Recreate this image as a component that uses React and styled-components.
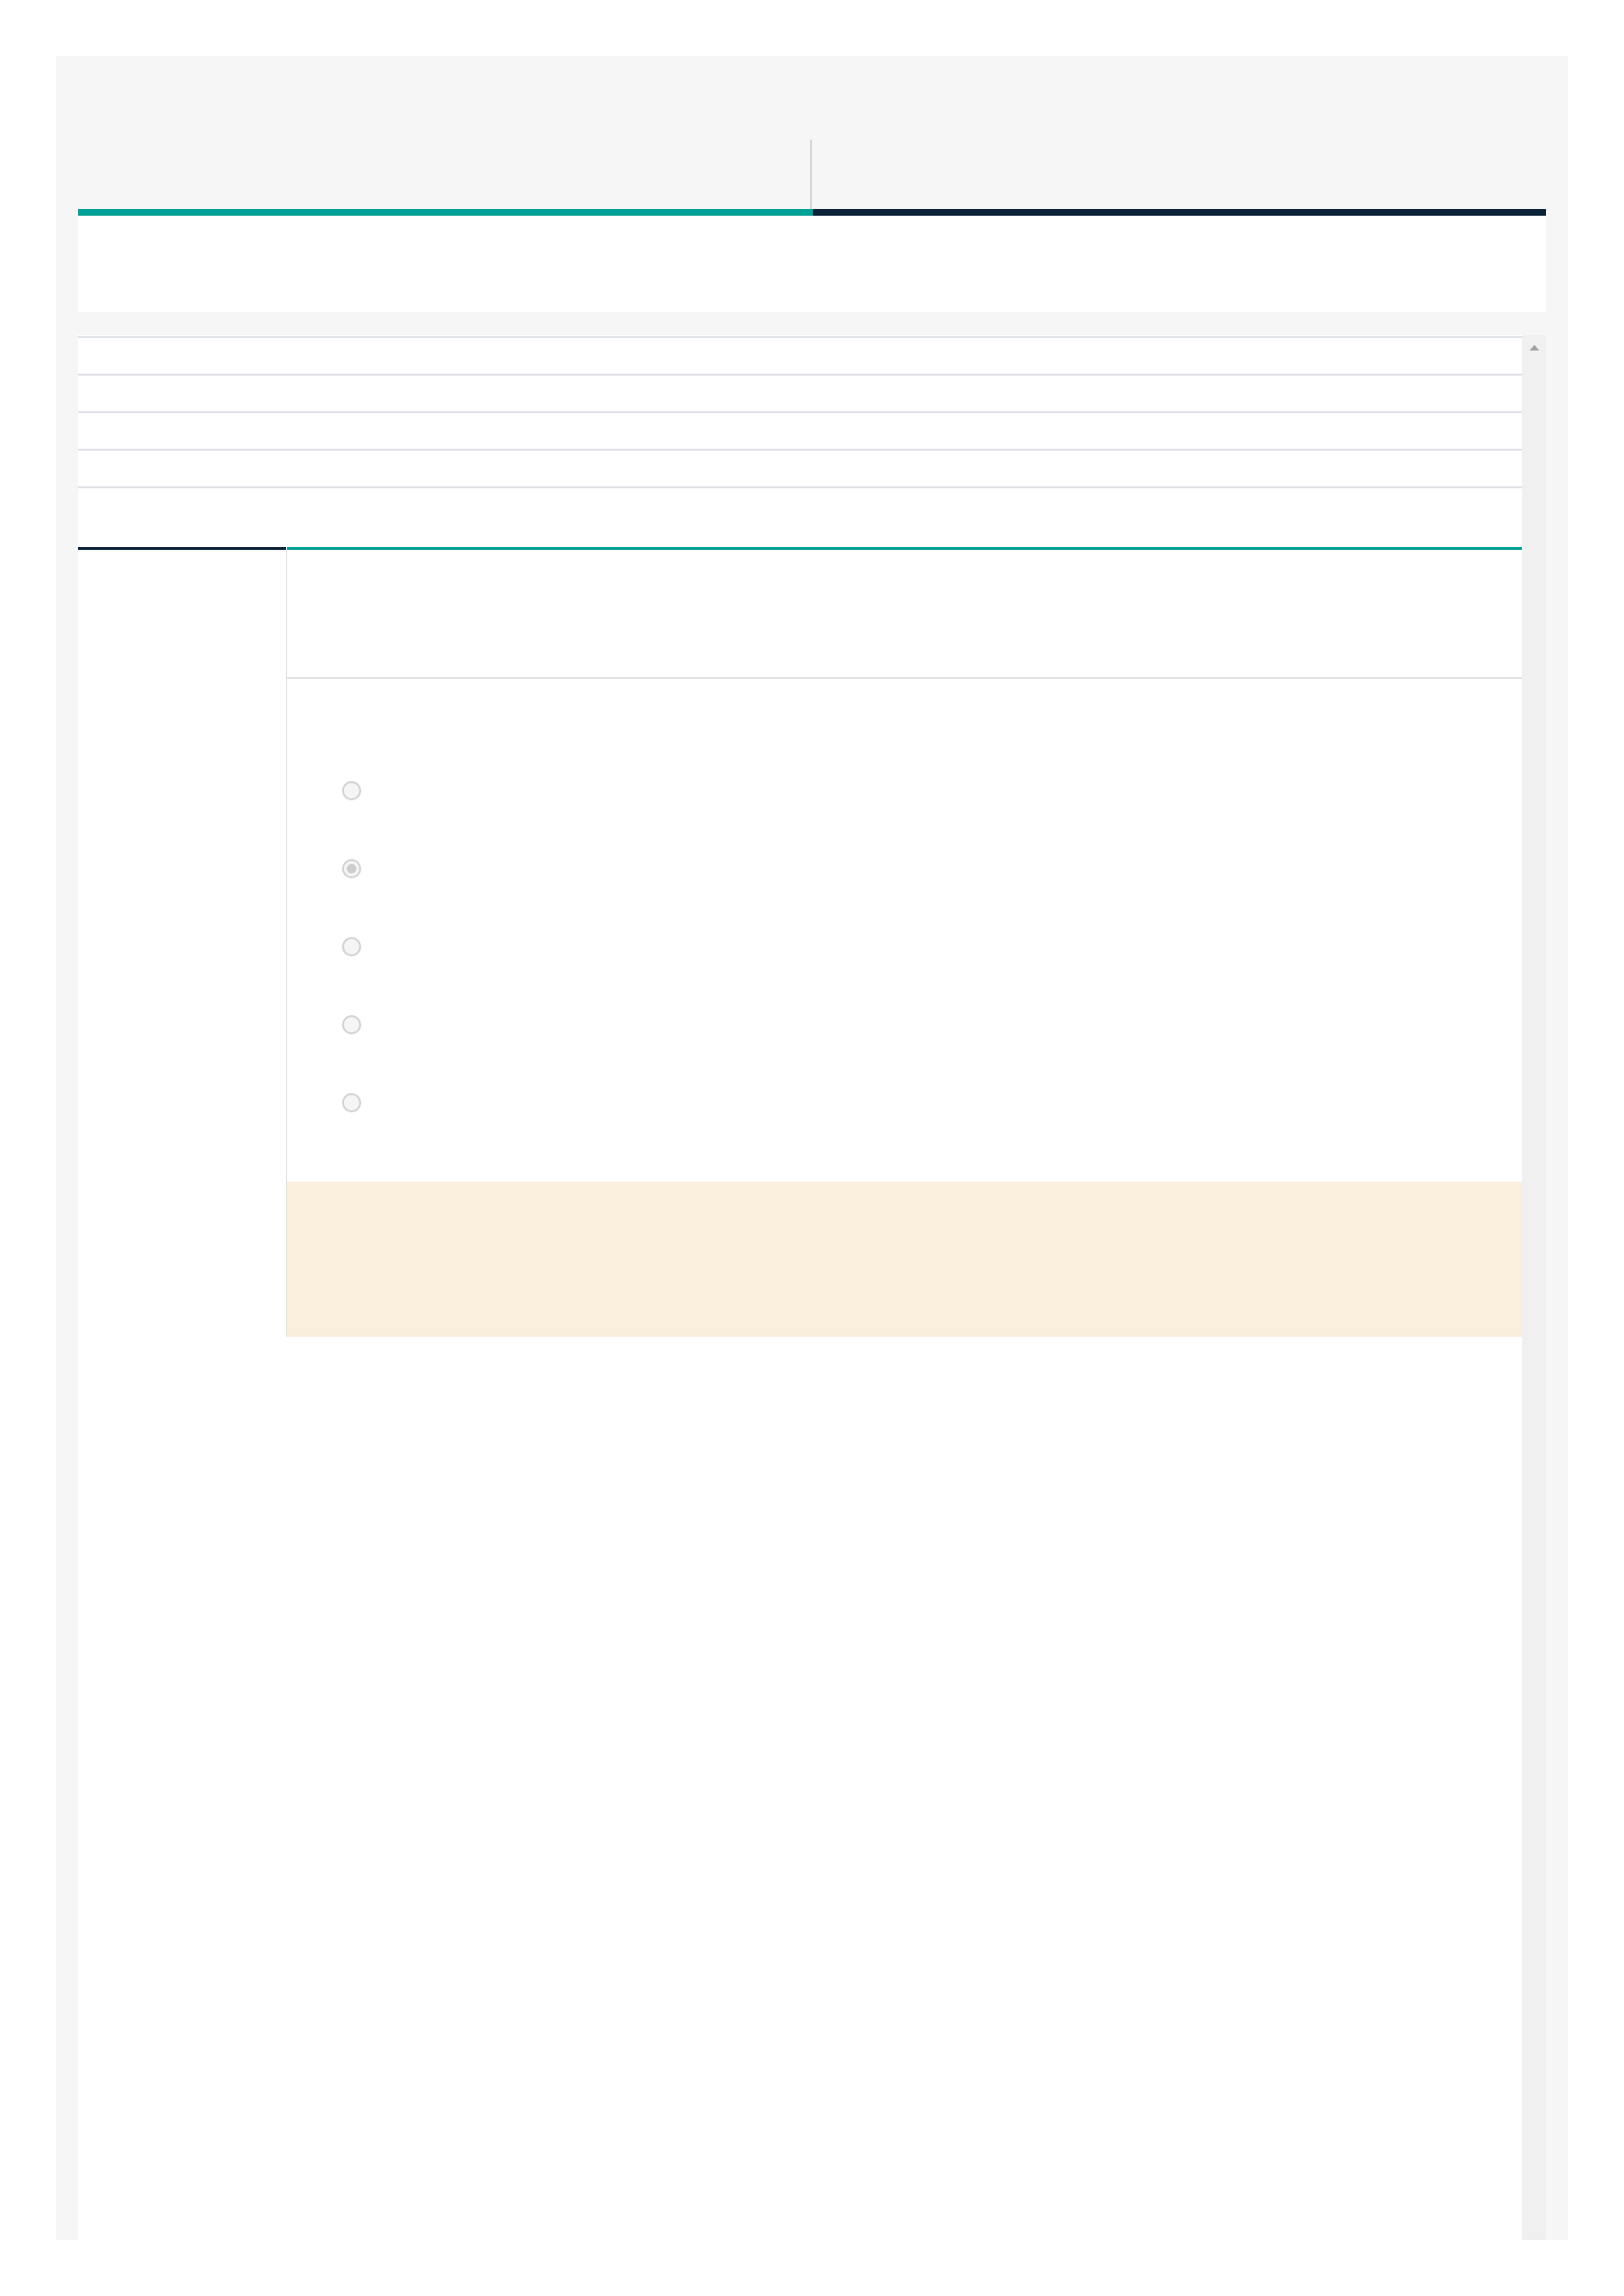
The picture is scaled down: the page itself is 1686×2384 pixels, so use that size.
import React from 'react'
import styled, { createGlobalStyle } from 'styled-components'

const GlobalStyle = createGlobalStyle`
  *, *::before, *::after {
    box-sizing: border-box;
  }
  body {
    margin: 0;
    background: #fff;
    font-family: 'Liberation Sans', Arial, sans-serif;
  }
`

const TEAL = '#02a095'
const NAVY = '#0b2239'

const Page = styled.div`
  padding: 58px;
`

const Frame = styled.div`
  display: flex;
  flex-direction: column;
  height: 2268px;
  padding: 0 23px;
  background: #f6f6f6;
`

const Tabs = styled.div`
  display: grid;
  grid-template-columns: 763px 1fr;
  padding-top: 87px;
`

const Tab = styled.div`
  display: flex;
  flex-direction: column;
`

const TabBody = styled.div`
  height: 72px;
  margin-right: ${p => (p.$divider ? '1px' : '0')};
  border-right: ${p => (p.$divider ? '2px solid #d4d4d4' : 'none')};
`

const Bar = styled.div`
  height: ${p => p.$size}px;
  margin-left: ${p => p.$inset || 0}px;
  background: ${p => p.$color};
`

const Summary = styled.div`
  height: 100px;
  background: #fff;
  margin-bottom: 24px;
`

const ScrollArea = styled.div`
  flex: 1;
  display: flex;
  min-height: 0;
`

const Content = styled.div`
  flex: 1;
  padding-top: 1px;
  background: #fff;
`

const Row = styled.div`
  height: ${p => (p.$tall ? 63 : 39)}px;
  border-top: 2px solid #dfe2e6;
`

const Split = styled.div`
  display: grid;
  grid-template-columns: 216px 1fr;
`

const Side = styled.div`
  display: flex;
  flex-direction: column;
`

const Main = styled.div`
  display: flex;
  flex-direction: column;
`

const MainBody = styled.div`
  border-left: 1px solid #e0e0e0;
`

const QuestionHead = styled.div`
  height: 134px;
  border-bottom: 2px solid #e2e2e2;
`

const Options = styled.div`
  padding: 75px 0 42px 57px;
`

const Option = styled.label`
  display: flex;
  align-items: center;
  height: 81px;
`

const Radio = styled.input.attrs({ type: 'radio' })`
  appearance: none;
  margin: 0;
  width: 20px;
  height: 20px;
  border-radius: 50%;
  border: 2px solid #d2d2d2;
  background: #f5f5f5;
  display: grid;
  place-items: center;

  &::before {
    content: '';
    width: 10px;
    height: 10px;
    border-radius: 50%;
    background: #cdcdcd;
    transform: scale(0);
  }

  &:checked::before {
    transform: scale(1);
  }
`

const Note = styled.div`
  height: 161px;
  background: #faeedc;
`

const Scrollbar = styled.div`
  width: 25px;
  padding-top: 10px;
  display: flex;
  justify-content: center;
  align-items: flex-start;
  background: #f0f0f0;
`

const UpArrow = styled.div`
  width: 0;
  height: 0;
  border-left: 5px solid transparent;
  border-right: 5px solid transparent;
  border-bottom: 6px solid #a3a3a3;
`

const options = [false, true, false, false, false]

export default function App() {
  return (
    <>
      <GlobalStyle />
      <Page>
        <Frame>
          <Tabs>
            <Tab>
              <TabBody $divider />
              <Bar $size={7} $color={TEAL} />
            </Tab>
            <Tab>
              <TabBody />
              <Bar $size={7} $color={NAVY} />
            </Tab>
          </Tabs>
          <Summary />
          <ScrollArea>
            <Content>
              <Row />
              <Row />
              <Row />
              <Row />
              <Row $tall />
              <Split>
                <Side>
                  <Bar $size={3} $color={NAVY} />
                </Side>
                <Main>
                  <Bar $size={3} $inset={1} $color={TEAL} />
                  <MainBody>
                    <QuestionHead />
                    <Options>
                      {options.map((checked, i) => (
                        <Option key={i}>
                          <Radio name="answer" defaultChecked={checked} />
                        </Option>
                      ))}
                    </Options>
                    <Note />
                  </MainBody>
                </Main>
              </Split>
            </Content>
            <Scrollbar>
              <UpArrow />
            </Scrollbar>
          </ScrollArea>
        </Frame>
      </Page>
    </>
  )
}
